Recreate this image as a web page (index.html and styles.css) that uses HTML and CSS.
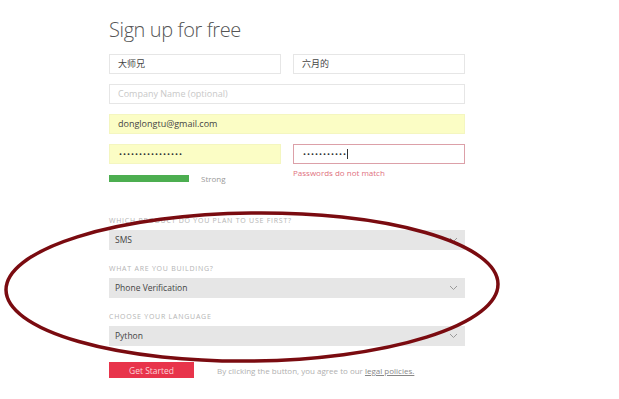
FILE: index.html
```html
<!DOCTYPE html>
<html lang="en">
<head>
  <meta charset="UTF-8" />
  <meta name="viewport" content="width=device-width, initial-scale=1.0" />
  <title>Sign up for free</title>
  <link rel="stylesheet" href="styles.css">
</head>
<body>
  <main class="signup">
    <h1>Sign up for free</h1>

    <div class="pair">
      <div class="field">大师兄</div>
      <div class="field">六月的</div>
    </div>

    <div class="field placeholder">Company Name (optional)</div>
    <div class="field filled">donglongtu@gmail.com</div>

    <div class="pair">
      <div class="col">
        <div class="field filled dots">••••••••••••••••</div>
        <div class="strength">
          <span class="bar"></span>
          <span class="strength-text">Strong</span>
        </div>
      </div>
      <div class="col">
        <div class="field invalid dots">•••••••••••<span class="caret"></span></div>
        <p class="error">Passwords do not match</p>
      </div>
    </div>

    <div class="choices">
      <label class="label">Which product do you plan to use first?</label>
      <div class="select">SMS
        <svg class="chev" width="9" height="6" viewBox="0 0 9 6"><path d="M1 1 L4.5 4.5 L8 1" fill="none" stroke="#999" stroke-width="1"/></svg>
      </div>

      <label class="label">What are you building?</label>
      <div class="select">Phone Verification
        <svg class="chev" width="9" height="6" viewBox="0 0 9 6"><path d="M1 1 L4.5 4.5 L8 1" fill="none" stroke="#999" stroke-width="1"/></svg>
      </div>

      <label class="label">Choose your language</label>
      <div class="select">Python
        <svg class="chev" width="9" height="6" viewBox="0 0 9 6"><path d="M1 1 L4.5 4.5 L8 1" fill="none" stroke="#999" stroke-width="1"/></svg>
      </div>
    </div>

    <div class="submit">
      <button class="btn">Get Started</button>
      <p class="terms">By clicking the button, you agree to our <a href="#">legal policies.</a></p>
    </div>
  </main>

  <!-- hand drawn circle around the select boxes -->
  <svg class="mark" width="619" height="399" viewBox="0 0 619 399">
    <ellipse cx="252" cy="287" rx="246" ry="74" transform="rotate(-0.7 252 287)" fill="none" stroke="#7a0b10" stroke-width="3.5"/>
  </svg>
</body>
</html>
```

FILE: styles.css
```css
body { margin: 0; background: #fff; font-family: "Open Sans", "Noto Sans CJK SC", sans-serif; color: #444; }
.signup { width: 356px; margin-left: 109px; padding-top: 16px; }
h1 { margin: 0 0 10px; font-size: 20px; line-height: 28px; font-weight: 300; letter-spacing: -0.4px; color: #555; }

.pair { display: grid; grid-template-columns: 172px 172px; column-gap: 12px; margin-bottom: 10px; }
.pair .field { margin-bottom: 0; }
.field {
  box-sizing: border-box;
  height: 20px;
  margin-bottom: 10px;
  padding-left: 8px;
  border: 1px solid #e6e6e6;
  font-size: 9px;
  line-height: 18px;
  color: #444;
  background: #fff;
}
.placeholder { color: #c8c8c8; }
.filled { background: #fbfdc5; border-color: #f4f6c0; }
.invalid { border-color: #dca0a8; }
.dots { font-size: 8px; letter-spacing: 1px; color: #333; padding-left: 9px; }
.caret { display: inline-block; width: 1px; height: 10px; background: #333; vertical-align: -2px; }

.strength { display: flex; align-items: center; height: 8px; margin-top: 10px; }
.bar { width: 80px; height: 7px; background: #4cae50; }
.strength-text { margin-left: 12px; font-size: 8px; color: #999; line-height: 8px; padding-top: 1px; }
.error { margin: 4px 0 0; font-size: 8px; line-height: 10px; color: #e0707e; }

.choices { margin-top: 34px; }
.label { display: block; font-size: 7px; line-height: 10px; letter-spacing: 0.75px; text-transform: uppercase; color: #b4b4b4; margin-bottom: 4px; }
.select {
  position: relative;
  box-sizing: border-box;
  height: 20px;
  padding-left: 6px;
  margin-bottom: 14px;
  background: #e6e6e6;
  font-size: 8.5px;
  line-height: 20px;
  color: #444;
}
.select:last-child { margin-bottom: 16px; }
.chev { position: absolute; right: 7px; top: 7px; }

.submit { display: flex; align-items: center; }
.btn {
  width: 85px;
  height: 16px;
  padding: 2px 0 0;
  border: 0;
  background: #e8344b;
  color: #fcd3d9;
  font-family: inherit;
  font-size: 8.5px;
  line-height: 14px;
}
.terms { margin: 0 0 0 23px; font-size: 8px; color: #b0b0b0; }
.terms a { color: #888; }

.mark { position: absolute; left: 0; top: 0; pointer-events: none; }
```
